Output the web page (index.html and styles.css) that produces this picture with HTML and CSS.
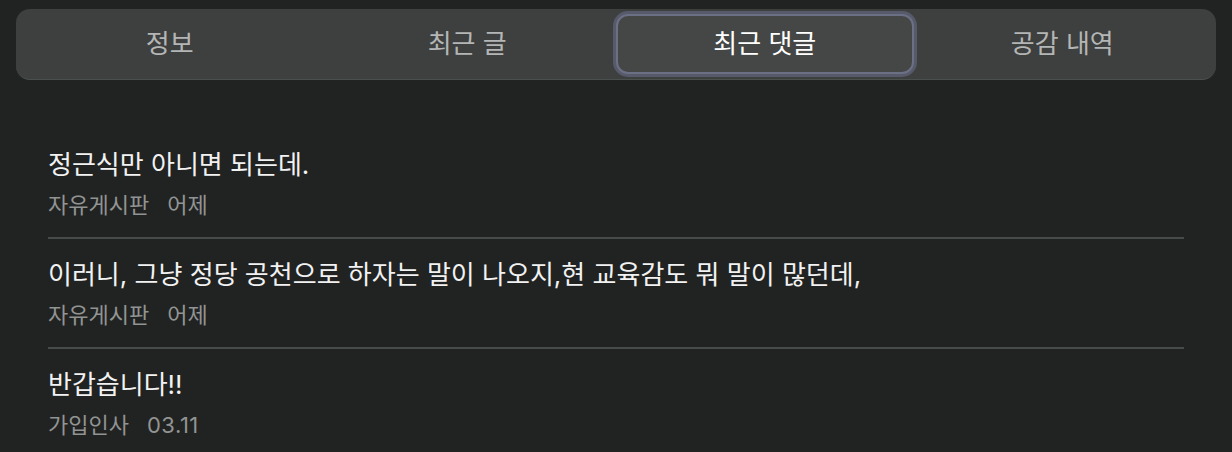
FILE: index.html
```html
<!DOCTYPE html>
<html lang="ko">
<head>
    <meta charset="UTF-8">
    <meta name="viewport" content="width=device-width, initial-scale=1.0">
    <title>내 활동</title>
    <link rel="stylesheet" href="styles.css">
</head>
<body>

    <nav class="tabs">
        <button class="tab">정보</button>
        <button class="tab">최근 글</button>
        <button class="tab active">최근 댓글</button>
        <button class="tab">공감 내역</button>
    </nav>

    <ul class="comments">
        <li class="comment">
            <div class="comment-text">정근식만 아니면 되는데.</div>
            <div class="comment-meta"><span>자유게시판</span><span>어제</span></div>
        </li>
        <li class="comment">
            <div class="comment-text">이러니, 그냥 정당 공천으로 하자는 말이 나오지,현 교육감도 뭐 말이 많던데,</div>
            <div class="comment-meta"><span>자유게시판</span><span>어제</span></div>
        </li>
        <li class="comment">
            <div class="comment-text">반갑습니다!!</div>
            <div class="comment-meta"><span>가입인사</span><span class="date">03.11</span></div>
        </li>
    </ul>

</body>
</html>
```

FILE: styles.css
```css
body {
    margin: 0;
    padding: 9px 16px 0;
    background-color: #212322;
    font-family: "Inter", "Noto Sans CJK KR", sans-serif;
    color: #f2f2f2;
    overflow: hidden;
}

.tabs {
    display: grid;
    grid-template-columns: repeat(4, 1fr);
    padding: 5px;
    height: 60px;
    background-color: #3e403f;
    border-bottom: 1px solid #4b514e;
    border-radius: 14px;
}

.tab {
    font-family: inherit;
    font-size: 26px;
    color: #b4b6b5;
    background: none;
    border: 2px solid transparent;
    border-radius: 12px;
    padding: 0;
    line-height: 1;
}

.tab.active {
    color: #fff;
    background-color: #454746;
    border-color: #6c7084;
    box-shadow: 0 0 0 3px #565a6a;
}

.comments {
    list-style: none;
    margin: 49px 32px 0;
    padding: 0;
}

.comment {
    padding: 20px 0 18px;
    border-bottom: 2px solid #474b49;
}

.comment:last-child {
    border-bottom: none;
}

.comment-text {
    font-size: 26px;
    line-height: 32px;
    color: #f2f2f2;
}

.comment-meta {
    display: flex;
    gap: 18px;
    margin-top: 10px;
    font-size: 22px;
    line-height: 28px;
    color: #929493;
}

.comment-meta .date {
    letter-spacing: 0.5px;
}
```
